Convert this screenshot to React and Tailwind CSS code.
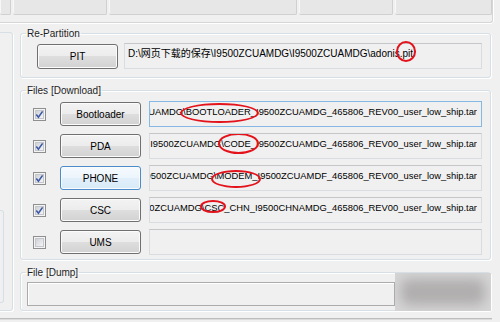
import React from 'react';

const btnBase =
  'flex h-[24px] w-[81px] shrink-0 items-center justify-center rounded-[3px] border text-[10px] text-black shadow-[inset_0_0_0_1px_#fbfbfb]';
const btnIdle =
  'border-[#707070] bg-[linear-gradient(#f3f3f3,#ececec_50%,#dedede_50%,#d2d2d2)]';
const btnHot =
  'border-[#4a8cc9] bg-[linear-gradient(#f5fafe,#ecf5fc_50%,#e1effa_50%,#d8eaf8)]';

function Ring({ children, className }) {
  // hand drawn red marker round a word
  return (
    <span className="relative">
      {children}
      <span className={`absolute rounded-[50%] border-2 border-[#e3121b] ${className}`} />
    </span>
  );
}

function Check({ on }) {
  return (
    <svg width="13" height="13" viewBox="0 0 13 13" className="shrink-0">
      <defs>
        <linearGradient id={on ? 'cbOn' : 'cbOff'} x1="0" y1="0" x2="1" y2="1">
          <stop offset="0%" stopColor="#cbcfd5" />
          <stop offset="100%" stopColor="#f7f7f7" />
        </linearGradient>
      </defs>
      <rect x="0.5" y="0.5" width="12" height="12" fill="#f4f4f4" stroke="#8f8f8f" />
      <rect x="2.5" y="2.5" width="8" height="8" fill={`url(#${on ? 'cbOn' : 'cbOff'})`} stroke="#c3c6cc" />
      {on && <path d="M3.3 6.6 L5.4 9.2 L9.6 3.4" fill="none" stroke="#3b5aa4" strokeWidth="1.6" />}
    </svg>
  );
}

function Field({ hot, children }) {
  return (
    <div
      className={`flex h-[26px] min-w-0 flex-1 justify-end overflow-hidden whitespace-nowrap border bg-[#f0f0f0] pr-[4px] pt-[3px] text-[9.4px] leading-[13px] ${
        hot ? 'border-[#86b8e6]' : 'border-[#d9dce0] border-t-[#c4c6ca]'
      }`}
    >
      <span className="shrink-0">{children}</span>
    </div>
  );
}

const rows = [
  {
    on: true,
    label: 'Bootloader',
    hot: true,
    text: (
      <>
        ZCUAMDG<Ring className="-inset-x-[3px] -top-[3px] -bottom-[6px]">\BOOTLOADER_</Ring>I9500ZCUAMDG_465806_REV00_user_low_ship.tar
      </>
    ),
  },
  {
    on: true,
    label: 'PDA',
    text: (
      <>
        I9500ZCUAMDG<Ring className="-inset-x-[3px] -top-[5px] -bottom-[5px]">\CODE_</Ring>I9500ZCUAMDG_465806_REV00_user_low_ship.tar
      </>
    ),
  },
  {
    on: true,
    label: 'PHONE',
    btnHot: true,
    text: (
      <>
        I9500ZCUAMDG<Ring className="-inset-x-[3px] top-0 -bottom-[7px]">\MODEM_</Ring>I9500ZCUAMDF_465806_REV00_user_low_ship.tar
      </>
    ),
  },
  {
    on: true,
    label: 'CSC',
    text: (
      <>
        I9500ZCUAMDG<Ring className="-inset-x-[2px] -top-[2px] bottom-0">\CSC</Ring>_CHN_I9500CHNAMDG_465806_REV00_user_low_ship.tar
      </>
    ),
  },
  { on: false, label: 'UMS', text: '' },
];

function Group({ title, className, children }) {
  return (
    <fieldset className="relative min-w-0 rounded-[3px] border border-[#d5dfe5] shadow-[inset_1px_1px_0_#fff,1px_1px_0_#fff]">
      <legend className="ml-[5px] px-[1px] text-[10px] leading-[13px] text-[#1e1e1e]">{title}</legend>
      <div className={className}>{children}</div>
    </fieldset>
  );
}

export default function App() {
  const cells = ['w-[11px]', 'w-[94px]', 'w-[188px]', 'w-[94px]', 'w-[97px]'];

  return (
    <div className="relative flex h-[322px] w-[500px] flex-col overflow-hidden bg-[#f0f0f0] font-['Liberation_Sans','Noto_Sans_CJK_SC',sans-serif] text-black">
      {/* top panel edge */}
      <div className="flex h-[23px] w-[493px] shrink-0 items-start rounded-br-[3px] border-b border-r border-[#d6d6d6] shadow-[0_1px_0_#fff,1px_0_0_#fff]">
        <div className="flex gap-[2px]">
          {cells.map((w, i) => (
            <div
              key={i}
              className={`h-[15px] ${w} rounded-b-[2px] border-b border-r border-[#d0d0d0] bg-[#e7e7e7] shadow-[inset_1px_0_0_#f7f7f7]`}
            />
          ))}
        </div>
      </div>

      <div className="mt-[4px] flex">
        {/* left panel, mostly off screen */}
        <div className="-ml-[4px] mt-[5px] flex h-[279px] w-[17px] shrink-0 flex-col justify-end rounded-r-[3px] border border-[#d5dfe5] pb-[7px] shadow-[1px_1px_0_#fff]">
          <div className="h-[93px] w-[7px] rounded-r-[3px] border border-l-0 border-[#d5dfe5]" />
        </div>

        <div className="ml-[7px] flex w-[471px] min-w-0 flex-col gap-[6px]">
          <Group title="Re-Partition" className="pb-[8px] pl-[16px] pr-[8px] pt-[3px]">
            <div className="flex items-center gap-[6px]">
              <div className={`${btnBase} ${btnIdle} mt-[1px] h-[25px]`}>PIT</div>
              <div className="h-[26px] min-w-0 flex-1 whitespace-nowrap border border-[#d9dce0] border-t-[#c4c6ca] bg-[#f0f0f0] pl-[3px] pt-[3px] text-[10px] leading-[13px]">
                D:\网页下载的保存\I9500ZCUAMDG\I9500ZCUAMDG\adonis
                <Ring className="-left-[4px] -right-[3px] -top-[7px] -bottom-[3px]">.pit</Ring>
              </div>
            </div>
          </Group>

          <Group title="Files [Download]" className="pb-[4px] pl-[12px] pr-[8px] pt-[4px]">
            <div className="flex flex-col gap-[6px]">
              {rows.map((r) => (
                <div key={r.label} className="flex h-[26px] min-w-0 items-center">
                  <Check on={r.on} />
                  <div className={`${btnBase} ${r.btnHot ? btnHot : btnIdle} ml-[14px] mr-[8px]`}>{r.label}</div>
                  <Field hot={r.hot}>{r.text}</Field>
                </div>
              ))}
            </div>
          </Group>

          <Group title="File [Dump]" className="pb-[4px] pl-[6px] pt-[3px]">
            <div className="flex">
              <div className="h-[24px] w-[368px] border border-[#ababab] bg-[#f0f0f0] shadow-[inset_1px_1px_0_#fff]" />
            </div>
            {/* blurred-out button */}
            <div className="absolute -bottom-[1px] -right-[1px] h-[38px] w-[96px] overflow-hidden bg-[#d6d5d5]">
              <div className="absolute inset-[6px] rounded-[8px] bg-[#b0aeae] blur-[6px]" />
            </div>
          </Group>
        </div>
      </div>

      <div className="mt-[7px] h-[2px] w-[492px] border-t border-[#bdbdbd] bg-[#dcdcdc]" />
    </div>
  );
}
